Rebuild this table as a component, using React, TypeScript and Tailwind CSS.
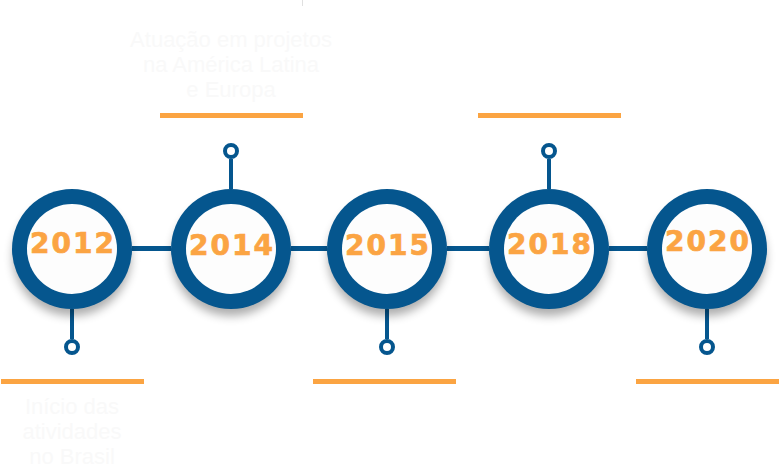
import React from "react";

type Item = {
  year: string;
  pos: "top" | "bottom";
  text?: string[];
  lineShift?: string;
  mark?: boolean;
  yearShift: string;
};

const items: Item[] = [
  { year: "2012", pos: "bottom", text: ["Início das", "atividades", "no Brasil"], yearShift: "-mt-[10px]" },
  { year: "2014", pos: "top", text: ["Atuação em projetos", "na América Latina", "e Europa"], mark: true, yearShift: "-mt-[6px]" },
  { year: "2015", pos: "bottom", lineShift: "mr-[6px]", yearShift: "-mt-[6px]" },
  { year: "2018", pos: "top", yearShift: "-mt-[8px]" },
  { year: "2020", pos: "bottom", yearShift: "-mt-[14px]" },
];

const connectors = ["w-[39px]", "w-[36px]", "w-[42px]", "w-[38px]"];

function Ring() {
  return <div className="w-[16px] h-[16px] rounded-full border-[4px] border-[#05568e] bg-white shrink-0" />;
}

function Stem() {
  return <div className="w-[4px] h-[30px] bg-[#05568e] shrink-0" />;
}

function OrangeLine({ shift }: { shift?: string }) {
  return <div className={`w-[143px] h-[5px] bg-[#fba442] shrink-0 ${shift ?? ""}`} />;
}

function Caption({ lines }: { lines?: string[] }) {
  if (!lines) return <div className="h-[75px]" />;
  return (
    <div className="whitespace-nowrap text-center text-[22px] leading-[25px] text-[#f9f9f9] font-['Liberation_Sans',Arial,sans-serif]">
      {lines.map((l, i) => (
        <div key={i}>{l}</div>
      ))}
    </div>
  );
}

function Column({ item }: { item: Item }) {
  return (
    <div className="w-[120px] shrink-0 flex flex-col items-center">
      <div className={`h-[189px] shrink-0 w-full flex flex-col items-center ${item.mark ? "justify-between" : "justify-end"}`}>
        {item.mark && (
          <div className="w-[143px] flex justify-end">
            <div className="w-[1px] h-[6px] bg-[#e0e0e0]" />
          </div>
        )}
        {item.pos === "top" && (
          <div className="flex flex-col items-center">
            <Caption lines={item.text} />
            <div className="mt-[11px]">
              <OrangeLine shift={item.lineShift} />
            </div>
            <div className="mt-[25px] flex flex-col items-center">
              <Ring />
              <Stem />
            </div>
          </div>
        )}
      </div>
      <div className="w-[120px] h-[120px] rounded-full bg-[#05568e] p-[15px] shrink-0 shadow-[0_8px_10px_-1px_rgba(0,0,0,0.32)] relative z-10">
        <div className="w-full h-full rounded-full bg-[#fdfdfd] flex items-center justify-center">
          <span
            className={`text-[28px] font-bold tracking-[2px] text-[#fba443] [-webkit-text-stroke:0.7px_#fba443] font-['DejaVu_Sans',sans-serif] ml-[2px] ${item.yearShift}`}
          >
            {item.year}
          </span>
        </div>
      </div>
      {item.pos === "bottom" && (
        <div className="flex flex-col items-center shrink-0">
          <Stem />
          <Ring />
          <div className="mt-[24px]">
            <OrangeLine shift={item.lineShift} />
          </div>
          <div className="mt-[10px]">
            <Caption lines={item.text} />
          </div>
        </div>
      )}
    </div>
  );
}

export default function App() {
  return (
    <div className="w-[780px] h-[466px] bg-white overflow-hidden flex items-start pl-[12px]">
      {items.map((it, i) => (
        <React.Fragment key={it.year}>
          <Column item={it} />
          {i < connectors.length && (
            <div className={`${connectors[i]} shrink-0`}>
              <div className="mt-[246px] h-[5px] bg-[#05568e]" />
            </div>
          )}
        </React.Fragment>
      ))}
    </div>
  );
}
